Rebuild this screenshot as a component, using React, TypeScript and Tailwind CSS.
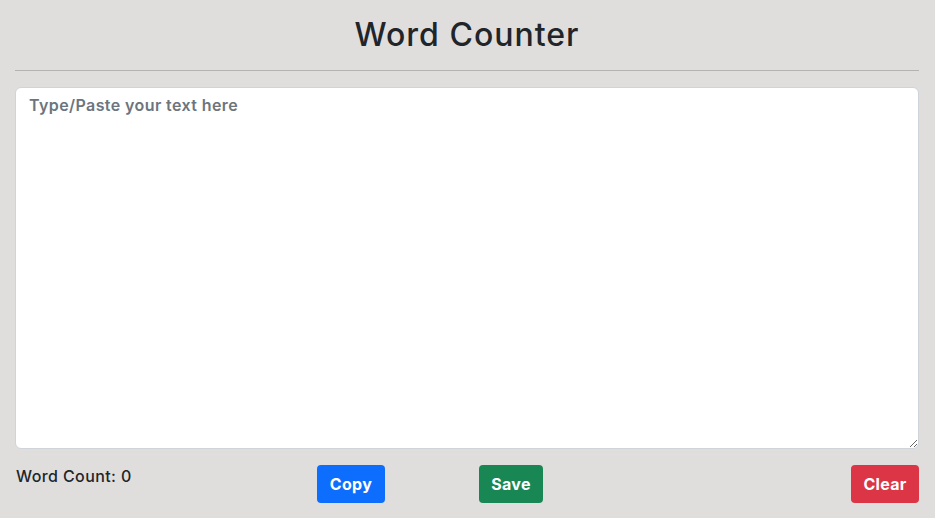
import { useState } from 'react'

export default function App() {
  const [text, setText] = useState('')
  const words = text.trim() ? text.trim().split(/\s+/).length : 0

  return (
    <div
      className="min-h-[518px] bg-[#dfdedd] pl-[15px] pr-[16px] pt-[16px] text-[#212529]"
      style={{ fontFamily: 'Inter, "Noto Sans", sans-serif' }}
    >
      <h1 className="text-center text-[32px] font-medium leading-[1.21] tracking-[1px] text-[#212529]">
        Word Counter
      </h1>
      <hr className="mt-[15px] border-t border-[#b3b3b3]" />
      <textarea
        value={text}
        onChange={(e) => setText(e.target.value)}
        placeholder="Type/Paste your text here"
        className="mt-[16px] block h-[362px] w-full rounded-[6px] border border-[#ced4da] bg-white px-[13px] py-[5px] text-[16px] font-semibold tracking-[0.4px] text-[#212529] outline-none placeholder:text-[#6c757d]"
      />
      <div className="mt-[16px] flex items-start">
        <div className="w-[302px] pl-px text-[16px] font-medium leading-[22px] tracking-[0.4px]">
          Word Count: {words}
        </div>
        <button className="h-[38px] w-[68px] rounded-[4px] bg-[#0d6efd] text-[16px] font-bold tracking-[0.3px] text-white">
          Copy
        </button>
        <button className="ml-[94px] h-[38px] w-[64px] rounded-[4px] bg-[#198754] text-[16px] font-bold tracking-[0.3px] text-white">
          Save
        </button>
        <button className="ml-auto h-[38px] w-[68px] rounded-[4px] bg-[#dc3545] text-[16px] font-bold tracking-[0.3px] text-white">
          Clear
        </button>
      </div>
    </div>
  )
}
